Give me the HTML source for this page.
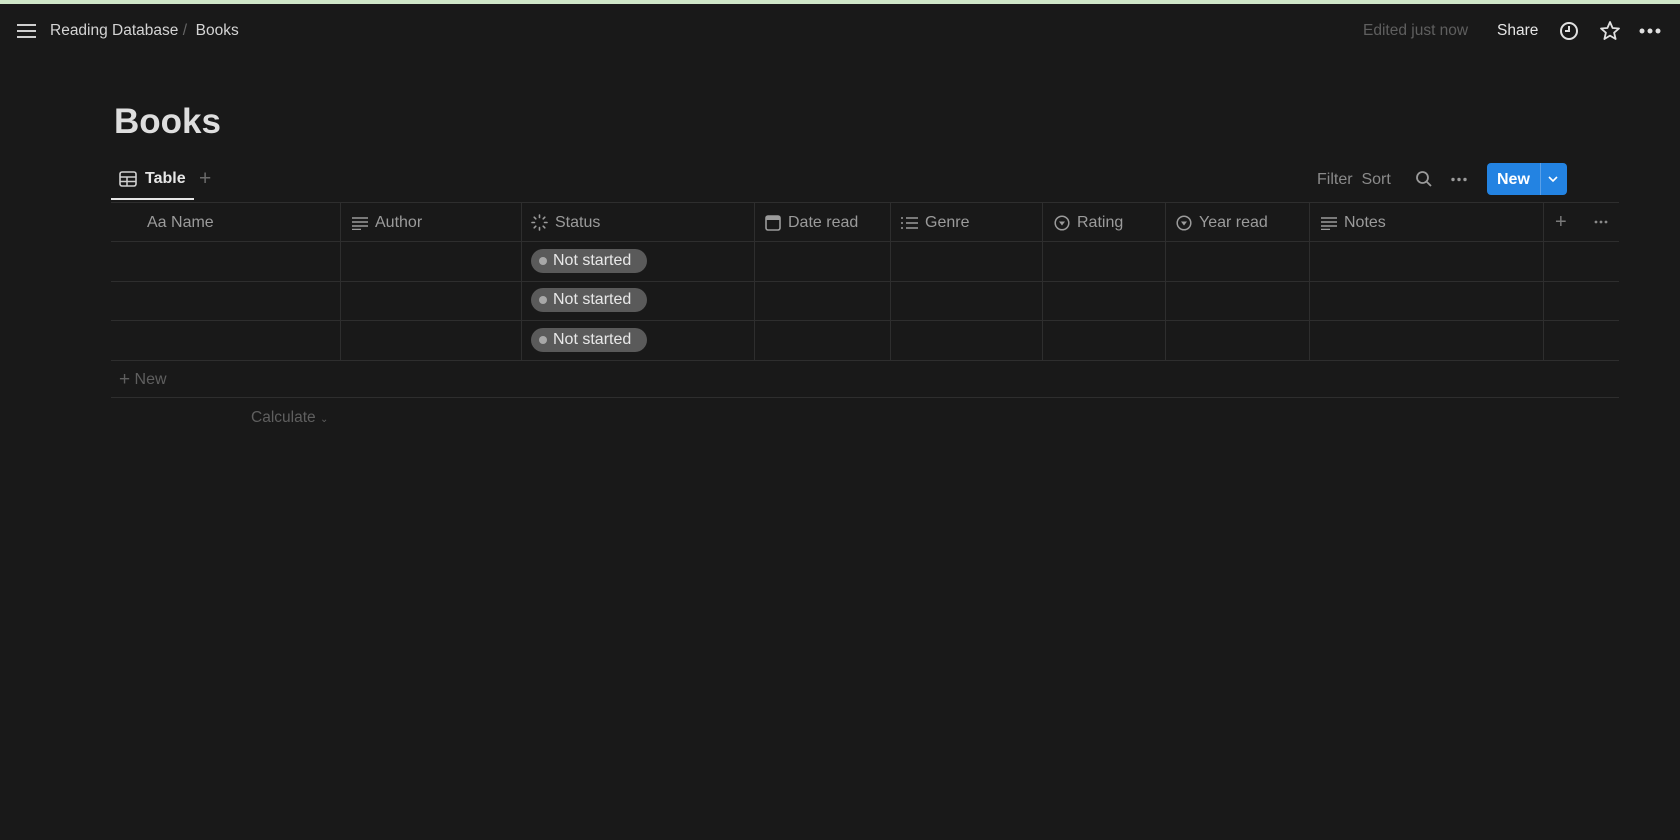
<!DOCTYPE html>
<html><head><meta charset="utf-8"><style>
*{box-sizing:border-box;margin:0;padding:0}
body{width:1680px;height:840px;background:#191919;font-family:"Liberation Sans",sans-serif;color:#d4d4d4;position:relative;overflow:hidden}
.a{position:absolute;white-space:nowrap}
.hl{position:absolute;height:1px;background:#2e2e2e}
.vl{position:absolute;width:1px;background:#2e2e2e;top:202px;height:158px}
.h{position:absolute;top:203px;height:39px;display:flex;align-items:center;font-size:16px;color:#9b9b9b;gap:7px}
.pill{position:absolute;left:531px;width:116px;height:24px;border-radius:12px;background:#5a5a5a;color:#e8e8e8;font-size:16px;display:flex;align-items:center;padding-left:8px}
.pill i{width:8px;height:8px;border-radius:50%;background:#a8a8a8;margin-right:6px}
</style></head><body>
<div class="a" style="left:0;top:0;width:1680px;height:4px;background:#cfe6c8"></div>
<svg class="a" style="left:17px;top:23px" width="19" height="16"><g stroke="#cfcfcf" stroke-width="2"><line x1="0" y1="2" x2="19" y2="2"/><line x1="0" y1="8" x2="19" y2="8"/><line x1="0" y1="14" x2="19" y2="14"/></g></svg>
<div class="a" style="left:50px;top:22px;font-size:15.5px;color:#d4d4d4">Reading Database <span style="color:#666">/</span>&nbsp; Books</div>
<div class="a" style="left:1363px;top:22px;font-size:15.5px;color:#5f5f5f">Edited just now</div>
<div class="a" style="left:1497px;top:22px;font-size:15.5px;color:#e6e6e6">Share</div>
<svg class="a" style="left:1559px;top:21px" width="20" height="20"><circle cx="10" cy="10" r="8" fill="none" stroke="#e0e0e0" stroke-width="2"/><path d="M10 5v5H6" fill="none" stroke="#e0e0e0" stroke-width="2"/></svg>
<svg class="a" style="left:1599px;top:20px" width="22" height="22"><path d="M11 2l2.6 6 6.4.5-4.9 4.2 1.5 6.3L11 15.6 5.4 19l1.5-6.3L2 8.5l6.4-.5z" fill="none" stroke="#e0e0e0" stroke-width="1.8" stroke-linejoin="round"/></svg>
<svg class="a" style="left:1639px;top:28px" width="22" height="6"><g fill="#e0e0e0"><circle cx="3" cy="3" r="2.5"/><circle cx="11" cy="3" r="2.5"/><circle cx="19" cy="3" r="2.5"/></g></svg>
<div class="a" style="left:114px;top:102px;font-size:35px;font-weight:bold;color:#dedede">Books</div>
<svg class="a" style="left:119px;top:171px" width="18" height="16"><rect x="1" y="1" width="16" height="14" rx="2" fill="none" stroke="#d0d0d0" stroke-width="1.6"/><line x1="1" y1="6" x2="17" y2="6" stroke="#d0d0d0" stroke-width="1.5"/><line x1="1" y1="10.5" x2="17" y2="10.5" stroke="#d0d0d0" stroke-width="1.5"/><line x1="8" y1="6" x2="8" y2="15" stroke="#d0d0d0" stroke-width="1.5"/></svg>
<div class="a" style="left:145px;top:170px;font-size:16px;font-weight:bold;color:#e6e6e6">Table</div>
<div class="a" style="left:199px;top:167px;font-size:21px;color:#6a6a6a">+</div>
<div class="a" style="left:111px;top:198px;width:83px;height:2px;background:#e6e6e6"></div>
<div class="a" style="left:1317px;top:171px;font-size:16px;color:#8a8a8a">Filter&nbsp; Sort</div>
<svg class="a" style="left:1415px;top:170px" width="18" height="18"><circle cx="7.5" cy="7.5" r="5.5" fill="none" stroke="#9a9a9a" stroke-width="1.8"/><line x1="11.5" y1="11.5" x2="16" y2="16" stroke="#9a9a9a" stroke-width="1.8"/></svg>
<svg class="a" style="left:1451px;top:177px" width="16" height="5"><g fill="#9a9a9a"><circle cx="2" cy="2.5" r="1.7"/><circle cx="8" cy="2.5" r="1.7"/><circle cx="14" cy="2.5" r="1.7"/></g></svg>
<div class="a" style="left:1487px;top:163px;width:80px;height:32px;background:#2383e2;border-radius:4px"></div>
<div class="a" style="left:1540px;top:163px;width:1px;height:32px;background:#5aa0e8"></div>
<div class="a" style="left:1497px;top:171px;font-size:16px;font-weight:bold;color:#fff">New</div>
<svg class="a" style="left:1548px;top:175px" width="10" height="8"><path d="M1 2l4 4 4-4" fill="none" stroke="#fff" stroke-width="1.6"/></svg>
<div class="hl" style="left:111px;width:1508px;top:202px"></div>
<div class="hl" style="left:111px;width:1508px;top:241px"></div>
<div class="hl" style="left:111px;width:1508px;top:281px"></div>
<div class="hl" style="left:111px;width:1508px;top:320px"></div>
<div class="hl" style="left:111px;width:1508px;top:360px"></div>
<div class="hl" style="left:111px;width:1508px;top:397px"></div>
<div class="vl" style="left:340px"></div><div class="vl" style="left:521px"></div><div class="vl" style="left:754px"></div><div class="vl" style="left:890px"></div><div class="vl" style="left:1042px"></div><div class="vl" style="left:1165px"></div><div class="vl" style="left:1309px"></div><div class="vl" style="left:1543px"></div>
<div class="h" style="left:147px">Aa Name</div>
<div class="h" style="left:352px"><svg width="16" height="14"><g stroke="#9b9b9b" stroke-width="1.5"><line x1="0" y1="2" x2="16" y2="2"/><line x1="0" y1="6" x2="16" y2="6"/><line x1="0" y1="10" x2="16" y2="10"/><line x1="0" y1="13.5" x2="9" y2="13.5"/></g></svg>Author</div>
<div class="h" style="left:531px"><svg width="17" height="17"><g stroke="#9b9b9b" stroke-width="1.6" stroke-linecap="round"><line x1="8.5" y1="1" x2="8.5" y2="3.5"/><line x1="8.5" y1="13.5" x2="8.5" y2="16"/><line x1="1" y1="8.5" x2="3.5" y2="8.5"/><line x1="13.5" y1="8.5" x2="16" y2="8.5"/><line x1="3.2" y1="3.2" x2="4.8" y2="4.8"/><line x1="12.2" y1="12.2" x2="13.8" y2="13.8"/><line x1="3.2" y1="13.8" x2="4.8" y2="12.2"/><line x1="12.2" y1="4.8" x2="13.8" y2="3.2"/></g></svg>Status</div>
<div class="h" style="left:765px"><svg width="16" height="16"><rect x="1" y="1" width="14" height="14" rx="2" fill="none" stroke="#9b9b9b" stroke-width="1.6"/><rect x="1" y="1" width="14" height="4" fill="#9b9b9b"/></svg>Date read</div>
<div class="h" style="left:901px"><svg width="17" height="14"><g stroke="#9b9b9b" stroke-width="1.5"><line x1="0" y1="2" x2="2" y2="2"/><line x1="0" y1="7" x2="2" y2="7"/><line x1="0" y1="12" x2="2" y2="12"/><line x1="5" y1="2" x2="17" y2="2"/><line x1="5" y1="7" x2="17" y2="7"/><line x1="5" y1="12" x2="17" y2="12"/></g></svg>Genre</div>
<div class="h" style="left:1054px"><svg width="16" height="16"><circle cx="8" cy="8" r="6.8" fill="none" stroke="#9b9b9b" stroke-width="1.5"/><path d="M5 6.5h6L8 10.5z" fill="#9b9b9b"/></svg>Rating</div>
<div class="h" style="left:1176px"><svg width="16" height="16"><circle cx="8" cy="8" r="6.8" fill="none" stroke="#9b9b9b" stroke-width="1.5"/><path d="M5 6.5h6L8 10.5z" fill="#9b9b9b"/></svg>Year read</div>
<div class="h" style="left:1321px"><svg width="16" height="14"><g stroke="#9b9b9b" stroke-width="1.5"><line x1="0" y1="2" x2="16" y2="2"/><line x1="0" y1="6" x2="16" y2="6"/><line x1="0" y1="10" x2="16" y2="10"/><line x1="0" y1="13.5" x2="9" y2="13.5"/></g></svg>Notes</div>
<div class="a" style="left:1555px;top:211px;font-size:20px;color:#7a7a7a">+</div>
<svg class="a" style="left:1594px;top:220px" width="14" height="4"><g fill="#8a8a8a"><circle cx="2" cy="2" r="1.4"/><circle cx="7" cy="2" r="1.4"/><circle cx="12" cy="2" r="1.4"/></g></svg>
<div class="pill" style="top:249px"><i></i>Not started</div>
<div class="pill" style="top:288px"><i></i>Not started</div>
<div class="pill" style="top:328px"><i></i>Not started</div>
<div class="a" style="left:119px;top:369px;font-size:16px;color:#5f5f5f"><span style="font-size:19px;vertical-align:-1px">+</span> New</div>
<div class="a" style="left:251px;top:409px;font-size:15.5px;color:#5f5f5f">Calculate <span style="font-size:10px">&#8964;</span></div>
</body></html>
